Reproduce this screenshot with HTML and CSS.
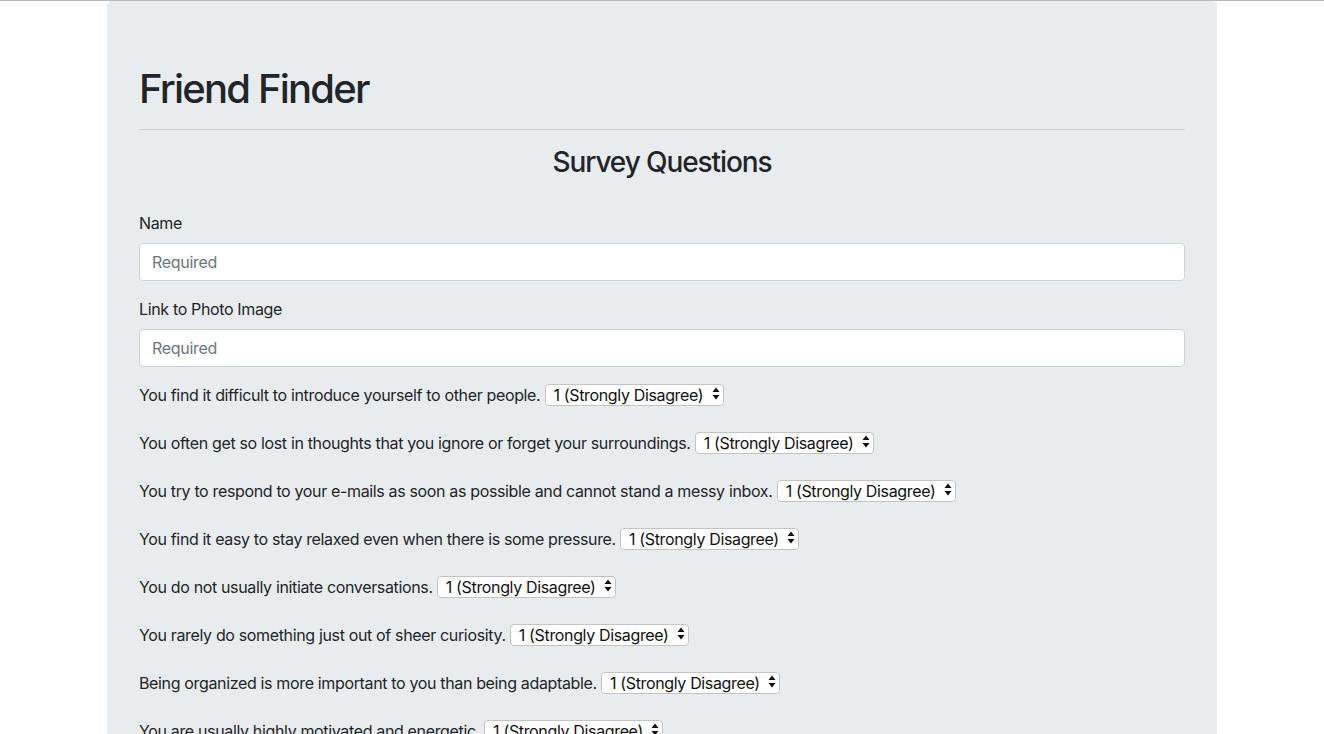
FILE: index.html
```html
<!DOCTYPE html>
<html lang="en">
<head>
<meta charset="utf-8">
<title>Friend Finder</title>
<link rel="stylesheet" href="styles.css">
</head>
<body>
<div class="container">
  <div class="jumbotron">
    <h1 class="title">Friend Finder</h1>
    <hr class="rule">
    <h3 class="subtitle">Survey Questions</h3>
    <form class="survey">
      <div class="form-group">
        <label class="field-label" for="name">Name</label>
        <input class="form-control" id="name" type="text" placeholder="Required">
      </div>
      <div class="form-group">
        <label class="field-label" for="photo">Link to Photo Image</label>
        <input class="form-control" id="photo" type="text" placeholder="Required">
      </div>

      <div class="form-group"><label class="q">You find it difficult to introduce yourself to other people. <span class="sel"><select><option>1 (Strongly Disagree)</option><option>2</option><option>3</option><option>4</option><option>5 (Strongly Agree)</option></select><svg class="arrows" width="8" height="13" viewBox="0 0 8 13"><path d="M4 0.5 L7.5 5 L0.5 5 Z M4 12.5 L7.5 8 L0.5 8 Z" fill="#111"/></svg></span></label></div>

      <div class="form-group"><label class="q">You often get so lost in thoughts that you ignore or forget your surroundings. <span class="sel"><select><option>1 (Strongly Disagree)</option><option>2</option><option>3</option><option>4</option><option>5 (Strongly Agree)</option></select><svg class="arrows" width="8" height="13" viewBox="0 0 8 13"><path d="M4 0.5 L7.5 5 L0.5 5 Z M4 12.5 L7.5 8 L0.5 8 Z" fill="#111"/></svg></span></label></div>

      <div class="form-group"><label class="q">You try to respond to your e-mails as soon as possible and cannot stand a messy inbox. <span class="sel"><select><option>1 (Strongly Disagree)</option><option>2</option><option>3</option><option>4</option><option>5 (Strongly Agree)</option></select><svg class="arrows" width="8" height="13" viewBox="0 0 8 13"><path d="M4 0.5 L7.5 5 L0.5 5 Z M4 12.5 L7.5 8 L0.5 8 Z" fill="#111"/></svg></span></label></div>

      <div class="form-group"><label class="q">You find it easy to stay relaxed even when there is some pressure. <span class="sel"><select><option>1 (Strongly Disagree)</option><option>2</option><option>3</option><option>4</option><option>5 (Strongly Agree)</option></select><svg class="arrows" width="8" height="13" viewBox="0 0 8 13"><path d="M4 0.5 L7.5 5 L0.5 5 Z M4 12.5 L7.5 8 L0.5 8 Z" fill="#111"/></svg></span></label></div>

      <div class="form-group"><label class="q">You do not usually initiate conversations. <span class="sel"><select><option>1 (Strongly Disagree)</option><option>2</option><option>3</option><option>4</option><option>5 (Strongly Agree)</option></select><svg class="arrows" width="8" height="13" viewBox="0 0 8 13"><path d="M4 0.5 L7.5 5 L0.5 5 Z M4 12.5 L7.5 8 L0.5 8 Z" fill="#111"/></svg></span></label></div>

      <div class="form-group"><label class="q">You rarely do something just out of sheer curiosity. <span class="sel"><select><option>1 (Strongly Disagree)</option><option>2</option><option>3</option><option>4</option><option>5 (Strongly Agree)</option></select><svg class="arrows" width="8" height="13" viewBox="0 0 8 13"><path d="M4 0.5 L7.5 5 L0.5 5 Z M4 12.5 L7.5 8 L0.5 8 Z" fill="#111"/></svg></span></label></div>

      <div class="form-group"><label class="q">Being organized is more important to you than being adaptable. <span class="sel"><select><option>1 (Strongly Disagree)</option><option>2</option><option>3</option><option>4</option><option>5 (Strongly Agree)</option></select><svg class="arrows" width="8" height="13" viewBox="0 0 8 13"><path d="M4 0.5 L7.5 5 L0.5 5 Z M4 12.5 L7.5 8 L0.5 8 Z" fill="#111"/></svg></span></label></div>

      <div class="form-group"><label class="q">You are usually highly motivated and energetic. <span class="sel"><select><option>1 (Strongly Disagree)</option><option>2</option><option>3</option><option>4</option><option>5 (Strongly Agree)</option></select><svg class="arrows" width="8" height="13" viewBox="0 0 8 13"><path d="M4 0.5 L7.5 5 L0.5 5 Z M4 12.5 L7.5 8 L0.5 8 Z" fill="#111"/></svg></span></label></div>

      <div class="form-group"><label class="q">Winning a debate matters less to you than making sure no one gets upset. <span class="sel"><select><option>1 (Strongly Disagree)</option><option>2</option><option>3</option><option>4</option><option>5 (Strongly Agree)</option></select><svg class="arrows" width="8" height="13" viewBox="0 0 8 13"><path d="M4 0.5 L7.5 5 L0.5 5 Z M4 12.5 L7.5 8 L0.5 8 Z" fill="#111"/></svg></span></label></div>

      <div class="form-group"><label class="q">You often feel as if you have to justify yourself to others. <span class="sel"><select><option>1 (Strongly Disagree)</option><option>2</option><option>3</option><option>4</option><option>5 (Strongly Agree)</option></select><svg class="arrows" width="8" height="13" viewBox="0 0 8 13"><path d="M4 0.5 L7.5 5 L0.5 5 Z M4 12.5 L7.5 8 L0.5 8 Z" fill="#111"/></svg></span></label></div>
    </form>
  </div>
</div>
</body>
</html>
```

FILE: styles.css
```css
* { box-sizing: border-box; }

html, body {
  margin: 0;
  padding: 0;
}

body {
  border-top: 1px solid #b9b9b9;
  background: #ffffff;
  color: #212529;
  font-family: Inter, "Helvetica Neue", Arial, sans-serif;
  font-size: 16px;
  line-height: 1.5;
  letter-spacing: -0.35px;
}

.container {
  width: 1140px;
  margin: 0 auto;
  padding: 0 15px;
}

.jumbotron {
  background: #e9ecef;
  border-radius: 4.8px;
  padding: 64px 32px;
  margin-bottom: 32px;
}

.title {
  margin: 0 0 8px;
  font-size: 40px;
  font-weight: 500;
  line-height: 1.2;
  letter-spacing: -1.8px;
}

.rule {
  margin: 16px 0;
  border: 0;
  border-top: 1px solid rgba(0, 0, 0, 0.1);
  height: 0;
}

.subtitle {
  margin: 0 0 8px;
  font-size: 28px;
  font-weight: 500;
  line-height: 1.2;
  text-align: center;
  letter-spacing: -1.1px;
}

.survey {
  padding-top: 23px;
}

.form-group {
  margin-bottom: 16px;
}

.field-label {
  display: inline-block;
  margin-bottom: 8px;
}

.form-control {
  display: block;
  width: 100%;
  height: 38px;
  padding: 6px 12px;
  font-family: inherit;
  font-size: 16px;
  line-height: 1.5;
  letter-spacing: -0.3px;
  color: #495057;
  background: #fff;
  border: 1px solid #ced4da;
  border-radius: 4px;
}

.form-control::placeholder {
  color: #6c757d;
  opacity: 1;
}

.q {
  display: inline-block;
  margin-bottom: 8px;
}

.sel {
  position: relative;
  display: inline-block;
  vertical-align: baseline;
}

.sel select {
  -webkit-appearance: none;
  appearance: none;
  font-family: inherit;
  font-size: 16px;
  letter-spacing: -0.35px;
  line-height: 20px;
  height: 22px;
  padding: 0 19px 0 8px;
  color: #111;
  background: #fff;
  border: 1px solid #c4c4c4;
  border-radius: 4px;
  margin: 0;
}

.arrows {
  position: absolute;
  right: 4px;
  top: 4px;
  pointer-events: none;
}
```
